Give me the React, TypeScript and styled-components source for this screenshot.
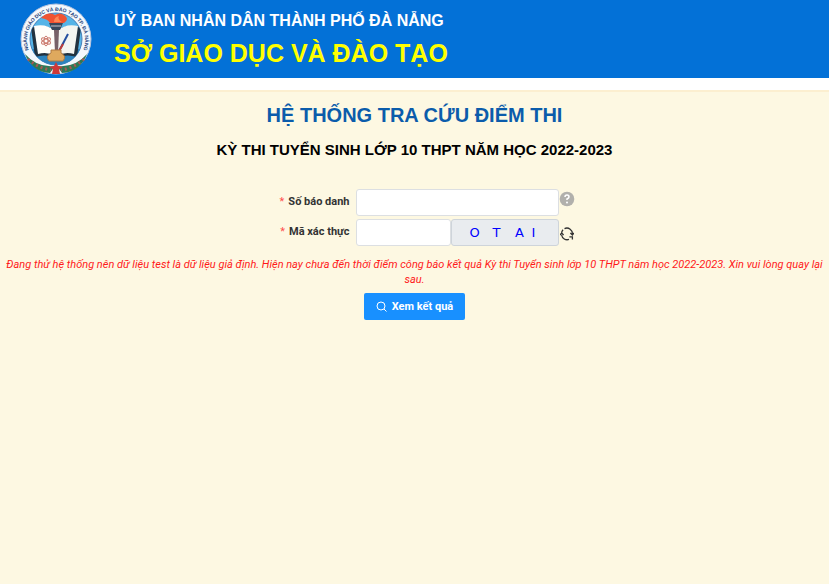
import React from "react";
import styled, { createGlobalStyle } from "styled-components";

const GlobalStyle = createGlobalStyle`
  * { box-sizing: border-box; }
  html, body { margin: 0; background: #fdf8e2; }
  body { font-family: "Liberation Sans", Arial, sans-serif; color: #000; }
`;

const Header = styled.header`
  display: flex;
  align-items: center;
  gap: 22px;
  height: 78px;
  padding-left: 20px;
  background: #0371d7;
`;
const Emblem = styled.svg`
  width: 72px;
  height: 72px;
  flex: none;
`;
const Titles = styled.div`
  display: flex;
  flex-direction: column;
  padding-bottom: 3px;
  font-weight: bold;
  white-space: nowrap;
`;
const Committee = styled.div`
  font-size: 16px;
  line-height: 30px;
  color: #fff;
`;
const Department = styled.div`
  font-size: 25px;
  line-height: 34px;
  color: #ffff00;
`;
const Main = styled.main`
  display: flex;
  flex-direction: column;
  align-items: center;
  border-top: 12px solid #fff;
  padding-top: 10px;
  box-shadow: inset 0 2px 0 #fcefd0;
`;
const Title = styled.h1`
  margin: 0;
  font-size: 20px;
  line-height: 30px;
  color: #0b5cab;
`;
const Subtitle = styled.h2`
  margin: 6px 0 0;
  font-size: 15px;
  line-height: 28px;
`;
const Form = styled.form`
  display: flex;
  flex-direction: column;
  align-items: center;
  width: 100%;
  padding-top: 25px;
  font-family: Roboto, Arial, sans-serif;
`;
const Fields = styled.div`
  display: grid;
  grid-template-columns: 101px 203px 16px;
  row-gap: 3px;
`;
const Label = styled.label`
  padding-right: 6px;
  text-align: right;
  font-size: 11px;
  font-weight: bold;
  line-height: 26px;
  white-space: nowrap;
  color: #333;
`;
const Required = styled.span`
  margin-right: 4px;
  font-weight: normal;
  color: #ff4d4f;
`;
const Control = styled.div`
  display: flex;
`;
const TextInput = styled.input`
  flex: 1;
  min-width: 0;
  height: 27px;
  padding: 0 8px;
  border: 1px solid #dcdfe2;
  border-radius: 3px;
  background: #fff;
  font: inherit;
  font-size: 12px;
`;
const Captcha = styled.div`
  display: grid;
  grid-template-columns: 22px 22px 24px 4px;
  align-items: center;
  justify-content: center;
  justify-items: center;
  width: 108px;
  height: 27px;
  padding-right: 10px;
  border: 1px solid #ced4da;
  border-radius: 3px;
  background: #e9ecef;
  font-family: "DejaVu Sans", sans-serif;
  font-size: 13px;
  color: #0000ff;
`;
const IconButton = styled.button<{ $raised?: boolean }>`
  display: flex;
  align-items: ${({ $raised }) => ($raised ? "flex-start" : "center")};
  justify-content: center;
  width: 17px;
  padding: 2px 0 0;
  border: 0;
  background: none;
  cursor: pointer;
`;
const Notice = styled.p`
  margin: 11px 0 0;
  padding: 0 2px;
  text-align: center;
  font-size: 11px;
  font-style: italic;
  line-height: 15px;
  color: #ff1a1a;
`;
const Submit = styled.button`
  display: flex;
  align-items: center;
  justify-content: center;
  gap: 5px;
  height: 27px;
  margin-top: 6px;
  padding: 0 12px;
  border: 0;
  border-radius: 2px;
  background: #1890ff;
  color: #fff;
  font: inherit;
  font-size: 11px;
  font-weight: bold;
  cursor: pointer;
`;

const Logo = () => (
  <Emblem viewBox="0 0 72 72" role="img" aria-label="Ngành Giáo dục và Đào tạo TP. Đà Nẵng">
    <defs>
      <path id="ring" d="M12.5 54 A29 29 0 1 1 59.5 54" />
      <clipPath id="disc"><circle cx="36" cy="36" r="26" /></clipPath>
    </defs>
    <circle cx="36" cy="36" r="35" fill="#f4f8fc" stroke="#b9c6df" strokeWidth="1" />
    <circle cx="36" cy="36" r="26" fill="#55b4e7" stroke="#4580b9" />
    <g clipPath="url(#disc)">
      <path d="M10 46 H62 V64 H10Z" fill="#2c83bd" />
      <path d="M11 25 Q24 20 36 28 Q48 20 61 25 L57 54 Q45 50 36 56 Q27 50 15 54Z" fill="#22323f" />
      <path d="M14 23 Q26 20 35 28 V53 Q27 48 18 51Z" fill="#fffefa" />
      <path d="M58 23 Q46 20 37 28 V53 Q45 48 54 51Z" fill="#f4f5f0" />
    </g>
    <path d="M34 27 H39 L38 50 H35Z" fill="#776168" />
    <path d="M29 20 H43 L40 27 H32Z" fill="#39475a" />
    <path d="M31 23 H41" stroke="#c5c7cd" />
    <path d="M30 20 Q28 16 21 15 Q28 8 35 12 Q40 9 44 12 Q50 16 44 20Z" fill="#f05332" />
    <path d="M34 19 Q34 14 39 13 Q37 16 42 19Z" fill="#ff8654" />
    <g fill="none" stroke="#cc7c70" strokeWidth="1">
      <ellipse cx="26" cy="38" rx="2" ry="5" />
      <ellipse cx="26" cy="38" rx="2" ry="5" transform="rotate(60 26 38)" />
      <ellipse cx="26" cy="38" rx="2" ry="5" transform="rotate(120 26 38)" />
    </g>
    <path d="M38 50 L48 31" stroke="#254f9f" strokeWidth="2" />
    <path d="M38 50 L43 41" stroke="#c03c3a" strokeWidth="2" />
    <path d="M31 47 H41 V50 Q47 53 43 58 H29 Q25 53 31 50Z" fill="#dfa95e" stroke="#af7941" />
    <path d="M5 51 Q17 65 35 63 L30 70 Q12 69 5 51Z" fill="#2c7956" />
    <path d="M67 51 Q55 65 37 63 L42 70 Q60 69 67 51Z" fill="#2c7956" />
    <path d="M8 56 Q18 65 31 67 M64 56 Q54 65 41 67" fill="none" stroke="#a85954" strokeWidth="3" strokeDasharray="2 3" />
    <path d="M36 59 L38 63 L43 64 L39 66 L40 71 H32 L33 66 L29 64 L34 63Z" fill="#ce3838" />
    <text fontFamily="Liberation Sans" fontSize="5" fontWeight="bold" fill="#263f7b">
      <textPath href="#ring" startOffset="50%" textAnchor="middle">NGÀNH GIÁO DỤC VÀ ĐÀO TẠO TP. ĐÀ NẴNG</textPath>
    </text>
  </Emblem>
);

const HelpIcon = () => (
  <svg width="16" height="16" viewBox="0 0 16 16" aria-hidden="true">
    <circle cx="8" cy="8" r="7.3" fill="#b1b0ac" />
    <path d="M6 6 Q6 4 8 4 Q10 4 10 6 Q10 7 8 8 V9" fill="none" stroke="#fff" strokeWidth="1.5" />
    <circle cx="8" cy="11.5" r="1" fill="#fff" />
  </svg>
);

const RefreshIcon = () => (
  <svg width="14" height="14" viewBox="0 0 14 14" fill="none" stroke="#333" strokeWidth="1.3" aria-hidden="true">
    <path d="M4.5 1.6 A5.6 5.6 0 0 1 12.4 7.4 M10.4 6 L12.4 8 L14 6" />
    <path d="M1.6 6.6 A5.6 5.6 0 0 1 3 2.8 M0 8 L1.6 6 L3.6 8 M1.6 8 A5.6 5.6 0 0 0 9 12.4 M12.4 12.6 V9.8 H9.4" />
  </svg>
);

const SearchIcon = () => (
  <svg width="11" height="11" viewBox="0 0 11 11" fill="none" stroke="#fff" aria-hidden="true">
    <circle cx="5" cy="5" r="4" />
    <path d="M8 8 L10.5 10.5" />
  </svg>
);

export default function App() {
  return (
    <>
      <GlobalStyle />
      <Header>
        <Logo />
        <Titles>
          <Committee>UỶ BAN NHÂN DÂN THÀNH PHỐ ĐÀ NẴNG</Committee>
          <Department>SỞ GIÁO DỤC VÀ ĐÀO TẠO</Department>
        </Titles>
      </Header>
      <Main>
        <Title>HỆ THỐNG TRA CỨU ĐIỂM THI</Title>
        <Subtitle>KỲ THI TUYỂN SINH LỚP 10 THPT NĂM HỌC 2022-2023</Subtitle>
        <Form onSubmit={(event) => event.preventDefault()}>
          <Fields>
            <Label htmlFor="candidate"><Required>*</Required>Số báo danh</Label>
            <Control><TextInput id="candidate" required /></Control>
            <IconButton type="button" aria-label="Trợ giúp" $raised><HelpIcon /></IconButton>
            <Label htmlFor="code"><Required>*</Required>Mã xác thực</Label>
            <Control>
              <TextInput id="code" required autoComplete="off" />
              <Captcha><span>O</span><span>T</span><span>A</span><span>I</span></Captcha>
            </Control>
            <IconButton type="button" aria-label="Đổi mã"><RefreshIcon /></IconButton>
          </Fields>
          <Notice>
            Đang thử hệ thống nên dữ liệu test là dữ liệu giả định. Hiện nay chưa đến thời điểm công báo kết quả Kỳ thi Tuyển sinh lớp 10 THPT năm học 2022-2023. Xin vui lòng quay lại sau.
          </Notice>
          <Submit type="submit"><SearchIcon />Xem kết quả</Submit>
        </Form>
      </Main>
    </>
  );
}
